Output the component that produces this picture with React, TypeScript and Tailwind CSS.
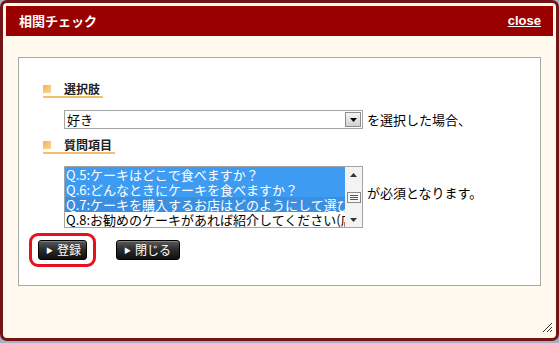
import React from 'react';

const jp = { fontFamily: '"Noto Sans CJK JP", "Noto Sans", sans-serif' };

function Heading({ label }: { label: string }) {
  return (
    <div className="flex">
      <div className="flex items-center h-[17px] pr-[3px] border-b-[2px] border-[#f0c070]">
        <span className="w-[8px] h-[8px] bg-gradient-to-br from-[#f6b455] to-[#fbd49a]" />
        <span className="ml-[13px] text-[12px] leading-[16px] font-bold text-[#222]">{label}</span>
      </div>
    </div>
  );
}

function DarkButton({ label, width }: { label: string; width: string }) {
  return (
    <button
      className={`${width} h-[20px] flex items-center pl-[7px] rounded-[3px] border border-black bg-gradient-to-b from-[#5a5a5a] via-[#2a2a2a] to-[#111] text-white text-[12px] leading-none shadow-[inset_0_1px_0_rgba(255,255,255,0.25)]`}
    >
      <span className="text-[7px] mr-[4px]">▶</span>
      <span>{label}</span>
    </button>
  );
}

const options = [
  { text: 'Q.5:ケーキはどこで食べますか？', sel: true },
  { text: 'Q.6:どんなときにケーキを食べますか？', sel: true },
  { text: 'Q.7:ケーキを購入するお店はどのようにして選びますか？', sel: true, focus: true },
  { text: 'Q.8:お勧めのケーキがあれば紹介してください(店名など)', sel: false },
];

export default function App() {
  return (
    <div className="w-[559px] h-[343px] bg-[#a9aec6] overflow-hidden" style={jp}>
      <div className="w-[559px] h-[341px] rounded-[7px] border-[3px] border-[#731416] bg-[#fff9ee] p-[3px] flex flex-col">
        {/* header */}
        <div className="h-[30px] bg-[#990000] flex items-center justify-between pl-[13px] pr-[12px]">
          <span className="text-white font-bold text-[13px]">相関チェック</span>
          <span
            className="text-white font-bold text-[13px] underline"
            style={{ fontFamily: '"Liberation Sans", Arial, sans-serif' }}
          >
            close
          </span>
        </div>

        <div className="flex-1 px-[12px] pt-[21px] relative">
          {/* white panel */}
          <div className="h-[229px] bg-white border border-[#a8a8a8] pl-[24px] pt-[23px] text-[13px] text-black">
            <Heading label="選択肢" />

            <div className="flex items-center mt-[12px] ml-[21px]">
              <div className="w-[299px] h-[19px] border border-[#a5a5a5] flex items-center justify-between pl-[2px] pr-[1px]">
                <span className="text-[13px] leading-none">好き</span>
                <span className="w-[16px] h-[15px] border border-[#8c8c8c] bg-gradient-to-b from-[#f4f4f4] to-[#d2d2d2] flex items-center justify-center">
                  <svg width="7" height="4" viewBox="0 0 7 4">
                    <path d="M0 0h7L3.5 4z" fill="#000" />
                  </svg>
                </span>
              </div>
              <span className="ml-[4px] leading-none">を選択した場合、</span>
            </div>

            <div className="mt-[8px]">
              <Heading label="質問項目" />
            </div>

            <div className="flex items-start mt-[12px] ml-[21px]">
              <div className="w-[299px] h-[62px] border border-[#a5a5a5] flex">
                <div className="flex-1 overflow-hidden">
                  {options.map((o) => (
                    <div
                      key={o.text}
                      className={`h-[15px] pl-[1px] whitespace-nowrap text-[13px] leading-[15px] ${
                        o.sel ? (o.focus ? 'bg-[#3a8fe0] text-white' : 'bg-[#3d9bf2] text-white') : 'text-black'
                      }`}
                    >
                      {o.text}
                    </div>
                  ))}
                </div>
                <div className="w-[17px] bg-[#f3f3f3] flex flex-col items-center justify-between">
                  <div className="h-[15px] w-full flex items-center justify-center">
                    <svg width="7" height="4" viewBox="0 0 7 4">
                      <path d="M0 4h7L3.5 0z" fill="#333" />
                    </svg>
                  </div>
                  <div className="w-[14px] h-[11px] border border-[#8a8a8a] bg-[#f8f8f8] flex flex-col items-center justify-center gap-[1px]">
                    <span className="w-[8px] h-px bg-[#555]" />
                    <span className="w-[8px] h-px bg-[#555]" />
                    <span className="w-[8px] h-px bg-[#555]" />
                  </div>
                  <div className="h-[15px] w-full flex items-center justify-center">
                    <svg width="7" height="4" viewBox="0 0 7 4">
                      <path d="M0 0h7L3.5 4z" fill="#333" />
                    </svg>
                  </div>
                </div>
              </div>
              <span className="ml-[4px] mt-[20px] leading-none">が必須となります。</span>
            </div>

            <div className="flex items-center mt-[5px] -ml-[14px]">
              <div className="border-[3px] border-[#e3121e] rounded-[9px] px-[6px] py-[4px]">
                <DarkButton label="登録" width="w-[49px]" />
              </div>
              <div className="ml-[20px]">
                <DarkButton label="閉じる" width="w-[64px]" />
              </div>
            </div>
          </div>

          {/* resize grip */}
          <svg className="absolute right-[0px] bottom-[2px]" width="11" height="11" viewBox="0 0 11 11">
            <path d="M10 1L1 10M10 5L5 10M10 8L8 10" stroke="#333" strokeWidth="1" />
          </svg>
        </div>
      </div>
    </div>
  );
}
